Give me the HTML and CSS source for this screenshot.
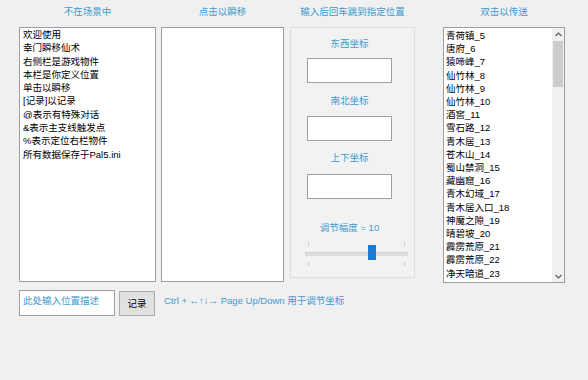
FILE: index.html
```html
<!DOCTYPE html>
<html>
<head>
<meta charset="utf-8">
<link rel="stylesheet" href="styles.css">
</head>
<body>
<div class="app">
  <div class="cols">
    <div class="col col-left">
      <div class="title">不在场景中</div>
      <div class="list">
        <div>欢迎使用</div>
        <div>幸门瞬移仙术</div>
        <div>右侧栏是游戏物件</div>
        <div>本栏是你定义位置</div>
        <div>单击以瞬移</div>
        <div>[记录]以记录</div>
        <div>@表示有特殊对话</div>
        <div>&amp;表示主支线触发点</div>
        <div>%表示定位右栏物件</div>
        <div>所有数据保存于Pal5.ini</div>
      </div>
    </div>
    <div class="col col-mid">
      <div class="title">点击以瞬移</div>
      <div class="list"></div>
    </div>
    <div class="col col-center">
      <div class="title">输入后回车跳到指定位置</div>
      <div class="panel">
        <div class="field">
          <div class="label l1">东西坐标</div>
          <div class="tbox b1"></div>
          <div class="label l2">南北坐标</div>
          <div class="tbox b2"></div>
          <div class="label l3">上下坐标</div>
          <div class="tbox b3"></div>
          <div class="label l4">调节幅度 = 10</div>
        </div>
        <div class="slider">
          <div class="ticks top"><span></span><span></span></div>
          <div class="track"><div class="thumb"></div></div>
          <div class="ticks bottom"><span></span><span></span></div>
        </div>
      </div>
    </div>
    <div class="col col-right">
      <div class="title">双击以传送</div>
      <div class="list list-scroll">
        <div class="items">
          <div>青荷镇_5</div>
          <div>唐府_6</div>
          <div>猿啼峰_7</div>
          <div>仙竹林_8</div>
          <div>仙竹林_9</div>
          <div>仙竹林_10</div>
          <div>酒窖_11</div>
          <div>雪石路_12</div>
          <div>青木居_13</div>
          <div>苍木山_14</div>
          <div>蜀山禁洞_15</div>
          <div>藏幽窟_16</div>
          <div>青木幻域_17</div>
          <div>青木居入口_18</div>
          <div>神魔之隙_19</div>
          <div>晴碧坡_20</div>
          <div>霹雳荒原_21</div>
          <div>霹雳荒原_22</div>
          <div>净天暗道_23</div>
        </div>
        <div class="scrollbar">
          <svg class="arrow" width="11" height="11" viewBox="0 0 11 11"><path d="M2.5 7 L5.5 4 L8.5 7" fill="none" stroke="#606060" stroke-width="1.2"/></svg>
          <div class="sb-track"><div class="sb-thumb"></div></div>
          <svg class="arrow" width="11" height="11" viewBox="0 0 11 11"><path d="M2.5 4 L5.5 7 L8.5 4" fill="none" stroke="#606060" stroke-width="1.2"/></svg>
        </div>
      </div>
    </div>
  </div>
  <div class="bottom">
    <div class="desc">此处输入位置描述</div>
    <div class="btn">记录</div>
    <div class="hint">Ctrl + ←↑↓→ Page Up/Down 用于调节坐标</div>
  </div>
</div>
</body>
</html>
```

FILE: styles.css
```css
html, body {
  margin: 0;
  padding: 0;
  background: #f0f0f0;
  width: 588px;
  height: 380px;
  overflow: hidden;
  font-family: "Liberation Sans", "Noto Sans CJK SC", sans-serif;
  font-size: 9.5px;
  color: #000;
}
.app {
  padding-left: 19px;
}
.cols {
  display: flex;
  align-items: flex-start;
}
.col {
  display: flex;
  flex-direction: column;
}
.title {
  height: 27px;
  line-height: 24px;
  text-align: center;
  color: #3d9ad0;
  font-size: 9.5px;
}
.col-left { width: 137px; }
.col-mid { width: 123px; margin-left: 5px; }
.col-center { width: 125px; margin-left: 6px; }
.col-right { width: 122px; margin-left: 28px; }

.list {
  box-sizing: border-box;
  height: 255px;
  background: #fff;
  border: 1px solid #9e9e9e;
  padding: 0 0 0 3px;
  line-height: 13.3px;
  white-space: nowrap;
}
.list-scroll {
  height: 256px;
  display: flex;
  padding: 0;
}
.items {
  flex: 1;
  padding: 1px 0 0 2px;
  line-height: 13.2px;
}
.scrollbar {
  width: 12px;
  display: flex;
  flex-direction: column;
  align-items: center;
  background: #f0f0f0;
  padding-top: 1px;
}
.arrow { flex: none; }
.sb-track {
  flex: 1;
  width: 10px;
}
.sb-thumb {
  margin-top: 1px;
  height: 46px;
  width: 10px;
  background: #cdcdcd;
}

.panel {
  box-sizing: border-box;
  height: 251px;
  border: 1px solid #dedede;
  background: #f2f2f2;
  padding-top: 6px;
}
.field {
  width: 85px;
  margin-left: 16px;
}
.label {
  line-height: 20px;
  height: 20px;
  text-align: center;
  color: #3d9ad0;
  font-size: 9.5px;
}
.tbox {
  box-sizing: border-box;
  height: 25px;
  background: #fff;
  border: 1px solid #a0a0a0;
}
.b1 { margin-top: 4px; }
.l2 { margin-top: 8px; }
.b2 { margin-top: 5px; }
.l3 { margin-top: 7px; }
.b3 { margin-top: 6px; }
.l4 { margin-top: 19px; }

.slider {
  margin: 4px 0 0 14px;
  width: 103px;
}
.ticks {
  display: flex;
  justify-content: space-between;
  padding: 0 3px;
  height: 4px;
}
.ticks span {
  width: 1px;
  height: 4px;
  background: #c8c8c8;
}
.track {
  position: relative;
  margin-top: 6px;
  height: 3px;
  background: #dcdcdc;
  border-top: 1px solid #d0d0d0;
}
.thumb {
  position: absolute;
  left: 63px;
  top: -8px;
  width: 8px;
  height: 15px;
  background: #1a7ad4;
}
.ticks.bottom { margin-top: 6px; }

.bottom {
  display: flex;
  align-items: flex-start;
  margin-top: 7px;
}
.desc {
  box-sizing: border-box;
  width: 96px;
  height: 26px;
  background: #fff;
  border: 1px solid #a0a0a0;
  color: #3d9ad0;
  font-size: 9.5px;
  padding: 3px 0 0 3px;
  line-height: 14px;
}
.btn {
  box-sizing: border-box;
  width: 36px;
  height: 25px;
  margin: 1px 0 0 4px;
  background: #e1e1e1;
  border: 1px solid #adadad;
  text-align: center;
  line-height: 23px;
  font-size: 9.5px;
}
.hint {
  margin-left: 9px;
  margin-top: 4px;
  color: #3d9ad0;
  font-size: 9.5px;
  line-height: 14px;
}
```
